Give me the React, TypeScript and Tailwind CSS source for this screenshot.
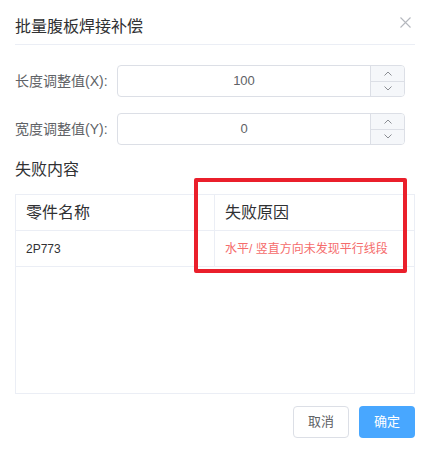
import React from "react";

const font = { fontFamily: '"Liberation Sans", "Noto Sans CJK SC", sans-serif' };

type SpinInputProps = {
  label: string;
  value: string;
};

const SpinInput = ({ label, value }: SpinInputProps) => {
  return (
    <div className="flex items-center h-[32px]">
      <label className="w-[102px] shrink-0 text-[14px] leading-[32px] text-[#606266] whitespace-nowrap">
        {label}
      </label>
      <div className="flex w-[288px] h-[32px] border border-[#dcdfe6] rounded-[4px] overflow-hidden bg-white">
        <div className="flex-1 flex items-center justify-center text-[13px] text-[#606266]">{value}</div>
        <div className="w-[34px] flex flex-col border-l border-[#dcdfe6] bg-[#f5f7fa]">
          <div className="flex-1 flex items-center justify-center border-b border-[#dcdfe6]">
            <svg width="8" height="5" viewBox="0 0 8 5" fill="none">
              <path d="M0.5 4.5 L4 1 L7.5 4.5" stroke="#8a8d93" strokeWidth="1" />
            </svg>
          </div>
          <div className="flex-1 flex items-center justify-center">
            <svg width="8" height="5" viewBox="0 0 8 5" fill="none">
              <path d="M0.5 0.5 L4 4 L7.5 0.5" stroke="#8a8d93" strokeWidth="1" />
            </svg>
          </div>
        </div>
      </div>
    </div>
  );
};

export default function App() {
  return (
    <div className="relative w-[428px] h-[451px] bg-white pl-[15px] pr-[13px]" style={font}>
      {/* header */}
      <div className="flex items-center justify-between h-[45px] pt-[10px] border-b border-[#ebeef5]">
        <span className="text-[16px] leading-[24px] text-[#303133]">批量腹板焊接补偿</span>
        <svg width="11" height="11" viewBox="0 0 11 11" className="mr-[4px] -mt-[10px]">
          <path d="M0.5 0.5 L10.5 10.5 M10.5 0.5 L0.5 10.5" stroke="#b4b7bd" strokeWidth="1.1" />
        </svg>
      </div>

      {/* form */}
      <div className="flex flex-col gap-[16px] mt-[20px]">
        <SpinInput label="长度调整值(X):" value="100" />
        <SpinInput label="宽度调整值(Y):" value="0" />
      </div>

      <div className="mt-[13px] text-[16px] leading-[24px] text-[#303133]">失败内容</div>

      {/* table */}
      <div className="mt-[12px] h-[200px] border border-[#ebeef5]">
        <div className="grid grid-cols-[199px_1fr] h-[36px] border-b border-[#ebeef5]">
          <div className="flex items-center pl-[10px] border-r border-[#ebeef5] text-[16px] text-[#303133]">零件名称</div>
          <div className="flex items-center pl-[10px] text-[16px] text-[#303133]">失败原因</div>
        </div>
        <div className="grid grid-cols-[199px_1fr] h-[36px] border-b border-[#ebeef5]">
          <div className="flex items-center pl-[10px] border-r border-[#ebeef5] text-[12px] text-[#303133]">2P773</div>
          <div className="flex items-center pl-[10px] text-[12px] text-[#f56c6c] whitespace-nowrap">水平/ 竖直方向未发现平行线段</div>
        </div>
      </div>

      {/* footer */}
      <div className="flex justify-end gap-[10px] mt-[12px]">
        <button className="w-[56px] h-[32px] rounded-[4px] border border-[#dcdfe6] bg-white text-[13px] text-[#606266]">
          取消
        </button>
        <button className="w-[56px] h-[32px] rounded-[4px] bg-[#48a7ff] text-[13px] text-white">
          确定
        </button>
      </div>

      {/* annotation */}
      <div className="absolute left-[194px] top-[178px] w-[213px] h-[95px] border-[4px] border-[#ea1f2b] rounded-[2px] pointer-events-none" />
    </div>
  );
}
